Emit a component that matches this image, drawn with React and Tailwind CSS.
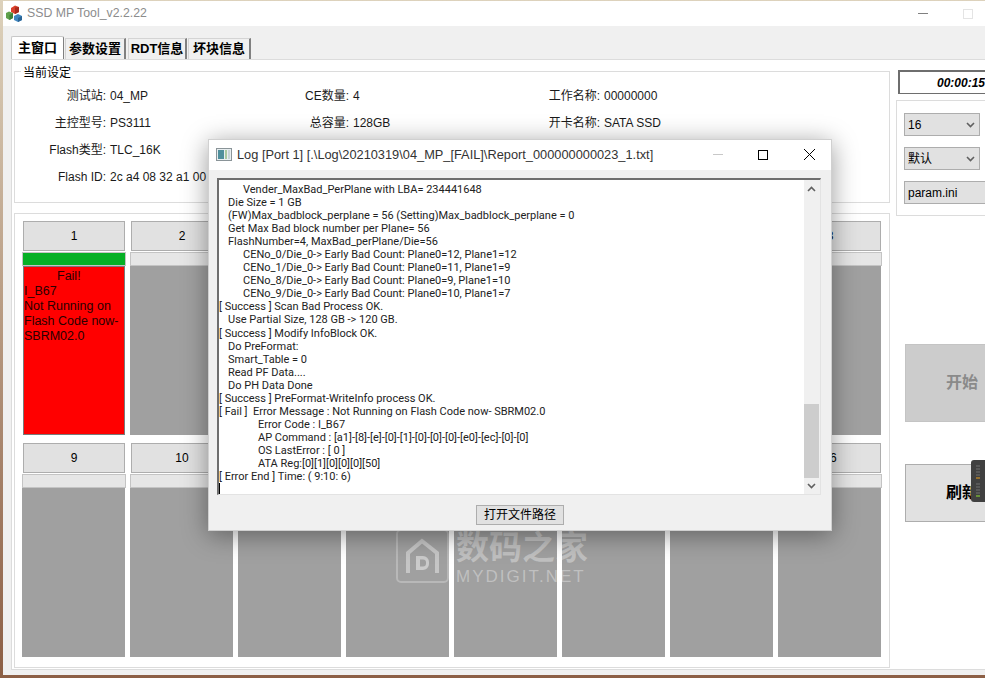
import React from 'react';

const uiFont = '[font-family:"Liberation_Sans","Noto_Sans_CJK_SC",sans-serif]';

const portsTop = [1, 2, 3, 4, 5, 6, 7, 8];
const portsBottom = [9, 10, 11, 12, 13, 14, 15, 16];

const logLines = [
  { text: 'Vender_MaxBad_PerPlane with LBA= 234441648', indent: 'pl-[24px]' },
  { text: 'Die Size = 1 GB', indent: 'pl-[9px]' },
  { text: '(FW)Max_badblock_perplane = 56 (Setting)Max_badblock_perplane = 0', indent: 'pl-[9px]' },
  { text: 'Get Max Bad block number per Plane= 56', indent: 'pl-[9px]' },
  { text: 'FlashNumber=4, MaxBad_perPlane/Die=56', indent: 'pl-[9px]' },
  { text: 'CENo_0/Die_0-> Early Bad Count: Plane0=12, Plane1=12', indent: 'pl-[24px]' },
  { text: 'CENo_1/Die_0-> Early Bad Count: Plane0=11, Plane1=9', indent: 'pl-[24px]' },
  { text: 'CENo_8/Die_0-> Early Bad Count: Plane0=9, Plane1=10', indent: 'pl-[24px]' },
  { text: 'CENo_9/Die_0-> Early Bad Count: Plane0=10, Plane1=7', indent: 'pl-[24px]' },
  { text: '[ Success ] Scan Bad Process OK.', indent: '' },
  { text: 'Use Partial Size, 128 GB -> 120 GB.', indent: 'pl-[9px]' },
  { text: '[ Success ] Modify InfoBlock OK.', indent: '' },
  { text: 'Do PreFormat:', indent: 'pl-[9px]' },
  { text: 'Smart_Table = 0', indent: 'pl-[9px]' },
  { text: 'Read PF Data....', indent: 'pl-[9px]' },
  { text: 'Do PH Data Done', indent: 'pl-[9px]' },
  { text: '[ Success ] PreFormat-WriteInfo process OK.', indent: '' },
  { text: '[ Fail ]  Error Message : Not Running on Flash Code now- SBRM02.0', indent: '' },
  { text: 'Error Code : I_B67', indent: 'pl-[39px]' },
  { text: 'AP Command : [a1]-[8]-[e]-[0]-[1]-[0]-[0]-[0]-[e0]-[ec]-[0]-[0]', indent: 'pl-[39px]' },
  { text: 'OS LastError : [ 0 ]', indent: 'pl-[39px]' },
  { text: 'ATA Reg:[0][1][0][0][0][50]', indent: 'pl-[39px]' },
  { text: '[ Error End ] Time: ( 9:10: 6)', indent: '' },
];

function AppIcon() {
  return (
    <svg width="16" height="17" viewBox="0 0 16 17">
      <path d="M5 3l4-2.500L13 2v5l-4 2-4-2z" fill="#d9402a" />
      <path d="M9 2.500L13 2v5l-4 2z" fill="#a82a1c" />
      <path d="M0 8l3-1.500L7 8v5l-3.500 2L0 13z" fill="#5fa04a" />
      <path d="M3.500 10L7 8v5l-3.500 2z" fill="#3f7f38" />
      <path d="M8 11l4-2 4 2v4l-4 2-4-2z" fill="#3f86bf" />
      <path d="M12 13l4-2v4l-4 2z" fill="#2a6596" />
    </svg>
  );
}

function LogIcon() {
  return (
    <svg width="16" height="13" viewBox="0 0 16 13">
      <rect x="0.5" y="0.5" width="15" height="12" fill="#e8eef0" stroke="#8a9498" />
      <rect x="2" y="2" width="6" height="9" fill="#4f8f9c" />
      <rect x="9" y="2" width="2" height="9" fill="#a8c8a0" />
      <rect x="12" y="2" width="2" height="9" fill="#c8d4d8" />
    </svg>
  );
}

function Chevron({ up }) {
  return (
    <svg width="9" height="6" viewBox="0 0 9 6" className={up ? 'rotate-180' : ''}>
      <path d="M1 1l3.500 3.500L8 1" fill="none" stroke="#606060" strokeWidth="1.600" />
    </svg>
  );
}

function InfoRow({ label, value, labelWidth }) {
  return (
    <div className="flex h-[27px] items-center gap-[4px] whitespace-nowrap">
      <span className={`${labelWidth} text-right`}>{label}</span>
      <span>{value}</span>
    </div>
  );
}

function Port({ n, fail }) {
  return (
    <div className="flex w-[102px] flex-col">
      <div className="flex h-[30px] items-center justify-center border border-[#adadad] bg-[#e1e1e1] text-[12px] text-black">
        {n}
      </div>
      <div
        className={`-mx-[1px] mt-[1px] h-[14px] border border-[#c4c4c4] ${fail ? 'bg-[#06b025]' : 'bg-[#e6e6e6]'}`}
      />
      {fail ? (
        <div className="h-[169px] border border-[#7a7a7a] bg-[#ff0000] pt-[2px] text-[12.5px] leading-[15px] text-[#2a0000]">
          <div className="pl-[33px]">Fail!</div>
          <div>I_B67</div>
          <div>Not Running on Flash Code now- SBRM02.0</div>
        </div>
      ) : (
        <div className="-ml-[1px] h-[169px] bg-[#a0a0a0]" />
      )}
    </div>
  );
}

function SelectBox({ children }) {
  return (
    <div className="flex h-[23px] w-[76px] items-center justify-between border border-[#adadad] bg-[#e1e1e1] pr-[4px] pl-[3px] text-[12px] text-black">
      <span>{children}</span>
      <Chevron />
    </div>
  );
}

export default function App() {
  return (
    <div className={`${uiFont} relative h-[678px] w-[985px] overflow-hidden bg-linear-to-b from-[#ddd2bc] to-[#8c5f45] pl-[3px] pt-[1px] text-[12px] text-[#1a1a1a]`}>
      {/* main window */}
      <div className="flex h-[674px] flex-col bg-[#f0f0f0]">
        <div className="flex h-[25px] shrink-0 items-center bg-white pl-[3px]">
          <AppIcon />
          <span className="ml-[5px] text-[12.3px] text-[#8c8c8c]">SSD MP Tool_v2.2.22</span>
          <div className="ml-auto flex items-center gap-[35px] pr-[12px]">
            <div className="h-px w-[10px] bg-[#808080]" />
            <div className="h-[10px] w-[10px] border border-[#e4e4e4]" />
          </div>
        </div>

        <div className="flex h-[33px] shrink-0 items-end pl-[8px]">
          <div className="flex h-[23px] w-[53px] items-center justify-center rounded-t-[2px] border border-b-0 border-[#c8c8c8] border-r-[#808080] bg-white text-[13px] font-bold text-black">主窗口</div>
          <div className="ml-[1px] flex h-[21px] w-[61px] items-center justify-center border border-b-0 border-r-2 border-[#d4d4d4] border-r-[#808080] text-[13px] font-bold text-black">参数设置</div>
          <div className="ml-[2px] flex h-[21px] w-[59px] items-center justify-center border border-b-0 border-r-2 border-[#d4d4d4] border-r-[#808080] text-[13px] font-bold text-black">RDT信息</div>
          <div className="ml-[1px] flex h-[21px] w-[63px] items-center justify-center border border-b-0 border-r-2 border-[#d4d4d4] border-r-[#808080] text-[13px] font-bold text-black">坏块信息</div>
        </div>

        <div className="mb-[5px] ml-[8px] flex min-h-0 flex-1 border-t border-b border-l border-[#dcdcdc] bg-white pl-[2px] pt-[11px]">
          {/* left side */}
          <div className="flex w-[876px] shrink-0 flex-col gap-[10px]">
            <div className="relative h-[132px] border border-[#dcdcdc] px-[4px] pt-[10px]">
              <span className="absolute -top-[8px] left-[6px] bg-white px-[2px] text-[12px] text-black">当前设定</span>
              <div className="flex">
                <div className="w-[242px]">
                  <InfoRow label="测试站:" value="04_MP" labelWidth="w-[87px]" />
                  <InfoRow label="主控型号:" value="PS3111" labelWidth="w-[87px]" />
                  <InfoRow label="Flash类型:" value="TLC_16K" labelWidth="w-[87px]" />
                  <InfoRow label="Flash ID:" value="2c a4 08 32 a1 00" labelWidth="w-[87px]" />
                </div>
                <div className="w-[252px]">
                  <InfoRow label="CE数量:" value="4" labelWidth="w-[88px]" />
                  <InfoRow label="总容量:" value="128GB" labelWidth="w-[88px]" />
                </div>
                <div>
                  <InfoRow label="工作名称:" value="00000000" labelWidth="w-[87px]" />
                  <InfoRow label="开卡名称:" value="SATA SSD" labelWidth="w-[87px]" />
                </div>
              </div>
            </div>

            <div className="flex h-[455px] flex-col gap-[8px] border border-[#dcdcdc] pl-[8px] pt-[7px]">
              <div className="flex gap-[6px]">
                {portsTop.map((n) => (
                  <Port key={n} n={n} fail={n === 1} />
                ))}
              </div>
              <div className="flex gap-[6px]">
                {portsBottom.map((n) => (
                  <Port key={n} n={n} />
                ))}
              </div>
            </div>
          </div>

          {/* right side */}
          <div className="flex w-[100px] shrink-0 flex-col pl-[6px]">
            <div className="-mt-[1px] ml-[2px] flex h-[24px] w-[100px] shrink-0 items-center border-2 border-b border-r border-[#6e6e6e] pl-[37px] text-[12px] font-bold italic text-black">
              00:00:15
            </div>
            <div className="mt-[6px] flex h-[116px] w-[100px] shrink-0 flex-col gap-[11px] border border-[#dcdcdc] pl-[7px] pt-[12px]">
              <SelectBox>16</SelectBox>
              <SelectBox>默认</SelectBox>
              <div className="flex h-[23px] w-[90px] items-center border border-[#adadad] bg-[#e1e1e1] pl-[3px] text-[12px] text-black">param.ini</div>
            </div>
            <div className="ml-[9px] mt-[128px] flex h-[78px] w-[90px] shrink-0 items-center border border-[#c4c4c4] bg-[#cccccc] pl-[40px] text-[16px] font-bold whitespace-nowrap text-[#8a8a8a]">
              开始
            </div>
            <div className="ml-[9px] mt-[42px] flex h-[58px] w-[90px] shrink-0 items-center border border-[#adadad] bg-[#e1e1e1] pl-[40px] text-[16px] font-bold whitespace-nowrap text-black">
              刷新
            </div>
          </div>
        </div>
      </div>

      {/* watermark sits over the page */}
      <div className="absolute left-[396px] top-[529px] flex gap-[7px] text-white/35">
        <svg width="53" height="54" viewBox="0 0 53 54">
          <rect x="1" y="1" width="51" height="52" rx="4" fill="none" stroke="#ffffff" strokeOpacity="0.25" strokeWidth="2" />
          <path d="M12 44V24L26 12l15 12v20" fill="none" stroke="#ffffff" strokeOpacity="0.4" strokeWidth="4" />
          <path d="M20 27h7a6 6 0 016 6v2a6 6 0 01-6 6h-7zm4 3.500v7h3a3 3 0 003-3v-1a3 3 0 00-3-3z" fill="#ffffff" fillOpacity="0.45" />
        </svg>
        <div className="flex flex-col">
          <span className="text-[33px] font-bold leading-[38px]">数码之家</span>
          <span className="text-[17px] leading-[20px] tracking-[2px]">MYDIGIT.NET</span>
        </div>
      </div>

      {/* log window */}
      <div className="absolute left-[208px] top-[139px] flex h-[392px] w-[624px] flex-col border border-[#d0d0d0] bg-[#f0f0f0] shadow-[0_4px_24px_rgba(0,0,0,0.4)]">
        <div className="flex h-[30px] shrink-0 items-center bg-white pb-[1px] pl-[7px]">
          <LogIcon />
          <span className="ml-[5px] text-[12.8px] text-[#333333]">Log [Port 1] [.\Log\20210319\04_MP_[FAIL]\Report_000000000023_1.txt]</span>
          <div className="ml-auto flex items-center">
            <div className="h-px w-[10px] bg-[#c8c8c8]" />
            <div className="ml-[35px] h-[10px] w-[10px] border border-black" />
            <svg width="11" height="11" viewBox="0 0 11 11" className="ml-[36px] mr-[16px]">
              <path d="M0 0l11 11M11 0L0 11" stroke="#000000" strokeWidth="1" />
            </svg>
          </div>
        </div>
        <div className="ml-[8px] mt-[8px] flex h-[317px] w-[604px] shrink-0 border-2 border-r border-b border-[#6e6e6e] border-r-[#e3e3e3] border-b-[#e3e3e3] bg-white">
          <div className="min-w-0 flex-1 overflow-hidden pt-[3px] [font-family:Roboto,sans-serif] text-[11px] leading-[13.05px] text-[#222222]">
            {logLines.map((line) => (
              <div key={line.text} className={`${line.indent} whitespace-pre`}>{line.text}</div>
            ))}
            <div className="h-[13px] w-px bg-black" />
          </div>
          <div className="flex w-[16px] shrink-0 flex-col bg-[#f0f0f0]">
            <div className="flex h-[17px] w-[15px] items-center justify-center"><Chevron up /></div>
            <div className="mt-[207px] h-[74px] w-[15px] bg-[#cdcdcd]" />
            <div className="flex w-[15px] flex-1 items-center justify-center"><Chevron /></div>
          </div>
        </div>
        <div className="flex flex-1 items-center justify-center pt-[4px]">
          <div className="flex h-[20px] w-[88px] items-center justify-center border border-[#adadad] bg-[#e1e1e1] text-[12px] text-black">打开文件路径</div>
        </div>
      </div>

      {/* floating monitor widget */}
      <svg className="absolute left-[971px] top-[460px]" width="14" height="42" viewBox="0 0 14 42">
        <rect width="20" height="42" rx="3" fill="#404040" />
        <path d="M5 6h4M5 9h4M5 12h4M5 15h4M5 24h4M5 27h4M5 30h4M5 33h4" stroke="#707070" strokeWidth="1" />
        <path d="M5 18h4" stroke="#e8a020" strokeWidth="1" />
        <path d="M5 36h4" stroke="#90e030" strokeWidth="1" />
      </svg>
    </div>
  );
}
